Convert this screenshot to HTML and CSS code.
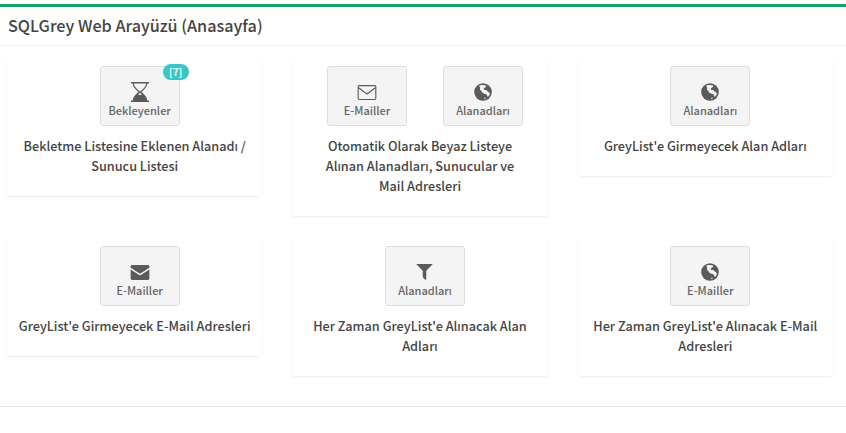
FILE: index.html
```html
<!DOCTYPE html>
<html lang="tr">
<head>
<meta charset="utf-8">
<title>SQLGrey Web Arayüzü</title>
<link rel="stylesheet" href="styles.css">
</head>
<body>
<svg class="defs" width="0" height="0" aria-hidden="true">
  <symbol id="i-hourglass" viewBox="0 0 18 20" preserveAspectRatio="none">
    <path d="M0 0h18v1.500h-1.800c0 3.400-3.200 6.500-5.700 8.500 2.500 2 5.700 5.100 5.700 8.500H18V20H0v-1.500h1.800c0-3.400 3.200-6.500 5.700-8.500C5 8 1.800 4.900 1.800 1.500H0z" fill="#5a5a5a"/>
    <path d="M3 1.500c0 3.200 3.500 6.100 6 8 2.500-1.900 6-4.800 6-8z" fill="#f4f4f4"/>
    <path d="M9 10.500c.7 1 1.200 1.500 2 2.300-1.300.2-2.700.2-4 0 .8-.8 1.300-1.300 2-2.300z" fill="#f4f4f4"/>
  </symbol>
  <symbol id="i-envelope-o" viewBox="0 0 20 16">
    <rect x=".6" y=".6" width="18.800" height="14.800" rx="1.200" fill="none" stroke="#5a5a5a" stroke-width="1.200"/>
    <path d="M1 3l9 6.600L19 3" fill="none" stroke="#5a5a5a" stroke-width="1.200"/>
  </symbol>
  <symbol id="i-envelope" viewBox="0 0 20 16">
    <path d="M1.500 0h17A1.500 1.500 0 0 1 20 1.500v1.400l-10 6.300L0 2.900V1.500A1.500 1.500 0 0 1 1.500 0z" fill="#5a5a5a"/>
    <path d="M0 4.900l10 6.300 10-6.300v9.600a1.500 1.500 0 0 1-1.500 1.500h-17A1.500 1.500 0 0 1 0 14.500z" fill="#5a5a5a"/>
  </symbol>
  <symbol id="i-globe" viewBox="0 0 18 18">
    <circle cx="9" cy="9" r="8.800" fill="#5a5a5a"/>
    <path d="M6.500 2.300c1.700-.6 3.900-.5 5.300.3.800.5.300 1.500-.6 1.900-.8.300-1.700.9-1.400 1.800.3.900 1.400.8 2.100.6 1 .2 1.300 1.100 2 1.700.8.600 1.600.9 1.900 1.700.2.800-.4 2-1.100 2.800-.6.600-1.200.9-1.400.2-.2-.8-.4-1.600-1.200-2-1-.5-2-.7-2.900-1.100-1-.5-1.400-1.400-1.900-2.300-.3-.6-1.300-.7-1.400-1.400-.1-.7.600-1 .3-1.700-.2-.7-1.300-1-.6-2.500z" fill="#f4f4f4"/>
    <path d="M11 14.600c.5.300.9.900.4 1.400-.5.300-1 .1-1.100-.4-.1-.5.300-1.100.7-1z" fill="#f4f4f4"/>
  </symbol>
  <symbol id="i-filter" viewBox="0 0 18 18">
    <path d="M.4 0h17.200c.5 0 .6.400.3.700L11 7.600V17c0 .8-.7 1.100-1.300.6L7.400 15.300c-.3-.3-.4-.5-.4-.9V7.600L.1.700C-.2.400-.1 0 .4 0z" fill="#5a5a5a"/>
  </symbol>
</svg>

<header class="title-bar">
  <h1 class="title">SQLGrey Web Arayüzü (Anasayfa)</h1>
</header>

<main class="rows">
  <section class="row">
    <article class="card">
      <div class="apps">
        <a class="app">
          <span class="badge">[7]</span>
          <svg class="icon icon-hourglass"><use href="#i-hourglass"/></svg>
          <span class="app-label">Bekleyenler</span>
        </a>
      </div>
      <p class="card-text">Bekletme Listesine Eklenen Alanadı / Sunucu Listesi</p>
    </article>
    <article class="card">
      <div class="apps">
        <a class="app">
          <svg class="icon icon-envelope"><use href="#i-envelope-o"/></svg>
          <span class="app-label">E-Mailler</span>
        </a>
        <a class="app">
          <svg class="icon icon-globe"><use href="#i-globe"/></svg>
          <span class="app-label">Alanadları</span>
        </a>
      </div>
      <p class="card-text">Otomatik Olarak Beyaz Listeye<br>Alınan Alanadları, Sunucular ve<br>Mail Adresleri</p>
    </article>
    <article class="card">
      <div class="apps">
        <a class="app">
          <svg class="icon icon-globe"><use href="#i-globe"/></svg>
          <span class="app-label">Alanadları</span>
        </a>
      </div>
      <p class="card-text">GreyList'e Girmeyecek Alan Adları</p>
    </article>
  </section>
  <section class="row">
    <article class="card">
      <div class="apps">
        <a class="app">
          <svg class="icon icon-envelope"><use href="#i-envelope"/></svg>
          <span class="app-label">E-Mailler</span>
        </a>
      </div>
      <p class="card-text">GreyList'e Girmeyecek E-Mail Adresleri</p>
    </article>
    <article class="card">
      <div class="apps">
        <a class="app">
          <svg class="icon icon-filter"><use href="#i-filter"/></svg>
          <span class="app-label">Alanadları</span>
        </a>
      </div>
      <p class="card-text">Her Zaman GreyList'e Alınacak Alan Adları</p>
    </article>
    <article class="card">
      <div class="apps">
        <a class="app">
          <svg class="icon icon-globe"><use href="#i-globe"/></svg>
          <span class="app-label">E-Mailler</span>
        </a>
      </div>
      <p class="card-text">Her Zaman GreyList'e Alınacak E-Mail Adresleri</p>
    </article>
  </section>
</main>
<footer class="foot-rule"></footer>
</body>
</html>
```
FILE: styles.css
```css
* { box-sizing: border-box; }
html, body { margin: 0; padding: 0; height: 100%; overflow: hidden; }
body {
  background: #fff;
  color: #333;
  font-family: "Noto Sans CJK SC", "Noto Sans", sans-serif;
  padding-top: 4px;
}
.defs { position: absolute; }
.title-bar {
  border-top: 3px solid #17a068;
  border-bottom: 1px solid #f0f0f0;
  height: 42px;
  padding: 8px 8px 0;
}
.title {
  margin: 0;
  font-size: 16.2px;
  line-height: 20px;
  font-weight: 500;
  color: #444;
}
.rows { padding: 10px 13px 0 7px; }
.row {
  display: grid;
  grid-template-columns: repeat(3, 255.33px);
  column-gap: 30px;
  align-items: start;
}
.card {
  background: #fff;
  border-radius: 3px;
  box-shadow: 0 1px 2px rgba(0,0,0,.07);
  padding: 10px;
  margin-bottom: 20px;
  text-align: center;
}
.apps {
  display: flex;
  justify-content: center;
  gap: 36px;
  margin: 0 0 10px 10px;
}
.app {
  position: relative;
  width: 80px;
  height: 60px;
  background: #f4f4f4;
  border: 1px solid #ddd;
  border-radius: 3px;
  color: #666;
  font-size: 11px;
  line-height: 16px;
  font-weight: 500;
  display: flex;
  flex-direction: column;
  align-items: center;
  justify-content: flex-end;
  padding-bottom: 7px;
}
.app-label { display: block; }
.icon { display: block; }
.icon-hourglass { width: 18px; height: 20px; margin-bottom: 0; }
.icon-envelope { width: 20px; height: 15px; margin-bottom: 2px; }
.icon-globe { width: 18px; height: 18px; margin-bottom: 1px; }
.icon-filter { width: 17px; height: 16px; margin-bottom: 2px; }
.badge {
  position: absolute;
  top: -3px;
  right: -10px;
  width: 26px;
  height: 16px;
  border-radius: 8px;
  background: #39c6c6;
  color: #e8fbfb;
  font-size: 10px;
  line-height: 16px;
  font-weight: 700;
  text-align: center;
}
.card-text {
  margin: 0;
  font-size: 12.7px;
  line-height: 20px;
  font-weight: 500;
  color: #444;
  padding-bottom: 10px;
}
.foot-rule {
  border-top: 1px solid #e8e8e8;
  margin-top: 10px;
}
```
